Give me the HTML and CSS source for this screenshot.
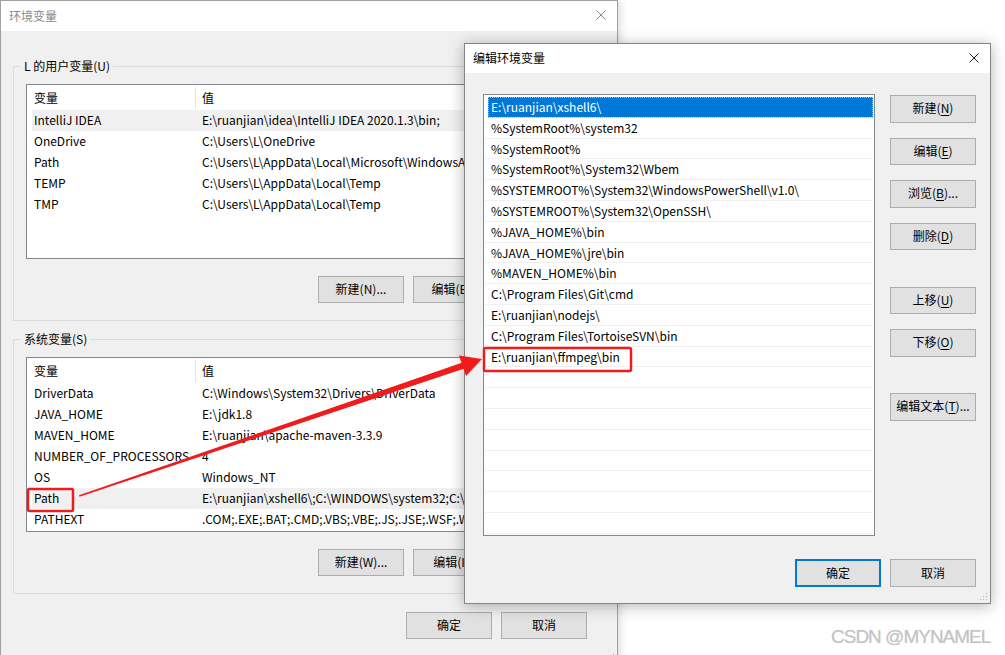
FILE: index.html
```html
<!DOCTYPE html>
<html lang="zh-CN">
<head>
    <meta charset="UTF-8">
    <title>环境变量</title>
    <link rel="stylesheet" href="styles.css">
</head>
<body>
    <div class="desk">

        <!-- 环境变量 (back window) -->
        <div class="win back">
            <div class="titlebar">
                <span class="title">环境变量</span>
                <svg class="close" width="10" height="10" viewBox="0 0 10 10"><path d="M0.5 0.5L9.5 9.5M9.5 0.5L0.5 9.5"/></svg>
            </div>
            <div class="win-body">
                <div class="group">
                    <div class="group-label">L 的用户变量(U)</div>
                    <div class="listview">
                        <div class="lv-head"><div class="c1">变量</div><div class="c2">值</div></div>
                        <div class="lv-row hot"><div class="c1">IntelliJ IDEA</div><div class="c2">E:\ruanjian\idea\IntelliJ IDEA 2020.1.3\bin;</div></div>
                        <div class="lv-row"><div class="c1">OneDrive</div><div class="c2">C:\Users\L\OneDrive</div></div>
                        <div class="lv-row"><div class="c1">Path</div><div class="c2">C:\Users\L\AppData\Local\Microsoft\WindowsApps;</div></div>
                        <div class="lv-row"><div class="c1">TEMP</div><div class="c2">C:\Users\L\AppData\Local\Temp</div></div>
                        <div class="lv-row"><div class="c1">TMP</div><div class="c2">C:\Users\L\AppData\Local\Temp</div></div>
                    </div>
                    <div class="btn-row">
                        <button>新建(N)...</button>
                        <button>编辑(E)...</button>
                        <button>删除(D)</button>
                    </div>
                </div>

                <div class="group sys">
                    <div class="group-label">系统变量(S)</div>
                    <div class="listview">
                        <div class="lv-head"><div class="c1">变量</div><div class="c2">值</div></div>
                        <div class="lv-row"><div class="c1">DriverData</div><div class="c2">C:\Windows\System32\Drivers\DriverData</div></div>
                        <div class="lv-row"><div class="c1">JAVA_HOME</div><div class="c2">E:\jdk1.8</div></div>
                        <div class="lv-row"><div class="c1">MAVEN_HOME</div><div class="c2">E:\ruanjian\apache-maven-3.3.9</div></div>
                        <div class="lv-row"><div class="c1">NUMBER_OF_PROCESSORS</div><div class="c2">4</div></div>
                        <div class="lv-row"><div class="c1">OS</div><div class="c2">Windows_NT</div></div>
                        <div class="lv-row hot"><div class="c1">Path</div><div class="c2">E:\ruanjian\xshell6\;C:\WINDOWS\system32;C:\WINDOWS</div></div>
                        <div class="lv-row"><div class="c1">PATHEXT</div><div class="c2">.COM;.EXE;.BAT;.CMD;.VBS;.VBE;.JS;.JSE;.WSF;.WSH;.MSC</div></div>
                    </div>
                    <div class="btn-row">
                        <button>新建(W)...</button>
                        <button>编辑(I)...</button>
                        <button>删除(L)</button>
                    </div>
                </div>

                <div class="dlg-buttons">
                    <button>确定</button>
                    <button>取消</button>
                </div>
            </div>
            <svg class="grip" width="10" height="10" viewBox="0 0 10 10"><path d="M8 2h1v1H8zM5 5h1v1H5zM8 5h1v1H8zM2 8h1v1H2zM5 8h1v1H5zM8 8h1v1H8z"/></svg>
        </div>

        <!-- 编辑环境变量 (front window) -->
        <div class="win front">
            <div class="titlebar">
                <span class="title">编辑环境变量</span>
                <svg class="close" width="10" height="10" viewBox="0 0 10 10"><path d="M0.5 0.5L9.5 9.5M9.5 0.5L0.5 9.5"/></svg>
            </div>
            <div class="win-body">
                <div class="edit-main">
                    <div class="pathlist">
                        <div class="p-row selected">E:\ruanjian\xshell6\</div>
                        <div class="p-row">%SystemRoot%\system32</div>
                        <div class="p-row">%SystemRoot%</div>
                        <div class="p-row">%SystemRoot%\System32\Wbem</div>
                        <div class="p-row">%SYSTEMROOT%\System32\WindowsPowerShell\v1.0\</div>
                        <div class="p-row">%SYSTEMROOT%\System32\OpenSSH\</div>
                        <div class="p-row">%JAVA_HOME%\bin</div>
                        <div class="p-row">%JAVA_HOME%\jre\bin</div>
                        <div class="p-row">%MAVEN_HOME%\bin</div>
                        <div class="p-row">C:\Program Files\Git\cmd</div>
                        <div class="p-row">E:\ruanjian\nodejs\</div>
                        <div class="p-row">C:\Program Files\TortoiseSVN\bin</div>
                        <div class="p-row">E:\ruanjian\ffmpeg\bin</div>
                        <div class="p-row"></div>
                        <div class="p-row"></div>
                        <div class="p-row"></div>
                        <div class="p-row"></div>
                        <div class="p-row"></div>
                        <div class="p-row"></div>
                        <div class="p-row"></div>
                        <div class="p-row"></div>
                    </div>
                    <div class="side-buttons">
                        <button>新建(<u>N</u>)</button>
                        <button class="gap-s">编辑(<u>E</u>)</button>
                        <button class="gap-s">浏览(<u>B</u>)...</button>
                        <button class="gap-s">删除(<u>D</u>)</button>
                        <button class="gap-l">上移(<u>U</u>)</button>
                        <button class="gap-s">下移(<u>O</u>)</button>
                        <button class="gap-l">编辑文本(<u>T</u>)...</button>
                    </div>
                </div>
                <div class="dlg-buttons">
                    <button class="default">确定</button>
                    <button>取消</button>
                </div>
            </div>
            <svg class="grip" width="10" height="10" viewBox="0 0 10 10"><path d="M8 2h1v1H8zM5 5h1v1H5zM8 5h1v1H8zM2 8h1v1H2zM5 8h1v1H5zM8 8h1v1H8z"/></svg>
        </div>

        <!-- 标注 -->
        <svg class="marks" width="1005" height="655" viewBox="0 0 1005 655">
            <rect x="28" y="489" width="45" height="22" rx="1.5"/>
            <rect x="484" y="348" width="147" height="23" rx="1.5"/>
            <polygon class="fill" points="79,495.3 79.5,496.8 464.5,368.5 462.5,362.5"/>
            <polygon class="fill" points="482,359 459,355.5 466,376"/>
        </svg>

        <div class="watermark">CSDN @MYNAMEL</div>
    </div>
</body>
</html>
```

FILE: styles.css
```css
body {
    margin: 0;
    padding: 0;
    background-color: white;
    font-family: "Noto Sans CJK SC", "Noto Sans", sans-serif;
    font-size: 12px;
    color: #000;
}
.desk {
    position: relative;
    width: 1005px;
    height: 655px;
    overflow: hidden;
}
.win {
    position: absolute;
    box-sizing: border-box;
    background-color: #f0f0f0;
    border: 1px solid #a0a0a0;
}
.back {
    left: 0;
    top: 0;
    width: 618px;
    height: 665px;
    box-shadow: 2px 0 8px rgba(0,0,0,0.15);
}
.front {
    left: 464px;
    top: 43px;
    width: 527px;
    height: 561px;
    border-color: #858585;
    box-shadow: 0 2px 14px rgba(0,0,0,0.3);
}
.titlebar {
    height: 30px;
    box-sizing: border-box;
    background-color: white;
    display: flex;
    align-items: center;
    justify-content: space-between;
    padding: 0 11px 2px 8px;
}
.front .titlebar {
    height: 29px;
}
.back .title {
    color: #8a8a8a;
}
.close {
    fill: none;
    stroke: #1a1a1a;
    stroke-width: 1;
}
.back .close {
    stroke: #8a8a8a;
}
.win-body {
    padding: 0 11px 0 12px;
}
button {
    font-family: inherit;
    font-size: 12px;
    color: #000;
    background: #e1e1e1;
    border: 1px solid #adadad;
    width: 86px;
    height: 28px;
    padding: 0 0 2px 0;
    margin: 0;
    box-sizing: border-box;
}
button u {
    text-decoration-thickness: 1px;
    text-underline-offset: 2px;
}
button.default {
    border: 2px solid #0078d7;
}

/* back window groups */
.group {
    border: 1px solid #dcdcdc;
    margin-top: 35px;
    padding: 0 11px 17px 12px;
}
.group.sys {
    margin-top: 18px;
}
.group-label {
    display: block;
    width: max-content;
    height: 16px;
    line-height: 16px;
    margin: -9px 0 0 -5px;
    padding: 0 3px;
    background-color: #f0f0f0;
}
.listview {
    margin-top: 10px;
    height: 175px;
    box-sizing: border-box;
    background: white;
    border: 1px solid #828790;
    overflow: hidden;
}
.lv-head {
    display: flex;
    height: 25px;
    align-items: center;
}
.lv-head .c1 {
    width: 161px;
    padding-left: 7px;
    border-right: 1px solid #e5e5e5;
    height: 22px;
    line-height: 22px;
}
.lv-head .c2 {
    padding-left: 6px;
}
.lv-row {
    display: flex;
    height: 21px;
    line-height: 20px;
    margin-left: 5px;
    white-space: nowrap;
}
.lv-row.hot {
    background-color: #f0f0f0;
}
.lv-row .c1 {
    width: 161px;
    padding-left: 2px;
    overflow: hidden;
    flex-shrink: 0;
}
.lv-row .c2 {
    padding-left: 7px;
}
.btn-row {
    display: flex;
    justify-content: flex-end;
    gap: 9px;
    margin-top: 17px;
}
.btn-row button {
    height: 27px;
}
.dlg-buttons {
    display: flex;
    justify-content: flex-end;
    gap: 9px;
    margin: 18px 19px 0 0;
}
.back .dlg-buttons button {
    height: 27px;
}

/* front window */
.front .win-body {
    padding: 21px 14px 0 18px;
}
.edit-main {
    display: flex;
    gap: 15px;
}
.pathlist {
    width: 392px;
    height: 442px;
    box-sizing: border-box;
    background: white;
    border: 1px solid #828790;
    padding: 2px 1px 0 1px;
    overflow: hidden;
}
.p-row {
    height: 20.8px;
    line-height: 20px;
    box-sizing: border-box;
    border-bottom: 1px solid #f0f0f0;
    padding-left: 6px;
    white-space: nowrap;
}
.p-row.selected {
    background-color: #0078d7;
    color: white;
    margin-left: 3px;
    padding-left: 3px;
    outline: 1px dotted #f0b050;
    outline-offset: -1px;
}
.side-buttons {
    display: flex;
    flex-direction: column;
    padding-top: 1px;
}
.side-buttons button {
    height: 27.5px;
}
.side-buttons .gap-s {
    margin-top: 15px;
}
.side-buttons .gap-l {
    margin-top: 36.5px;
}
.front .dlg-buttons {
    margin: 23px 0 0 0;
}
.grip {
    position: absolute;
    right: 2px;
    bottom: 2px;
    fill: #b5b5b5;
}

/* annotations */
.marks {
    position: absolute;
    left: 0;
    top: 0;
    pointer-events: none;
}
.marks rect {
    fill: none;
    stroke: #f01c1c;
    stroke-width: 2.5;
}
.marks .fill {
    fill: #f01c1c;
    stroke: none;
}
.watermark {
    position: absolute;
    left: 831px;
    top: 626px;
    font-family: "Liberation Sans", Arial, sans-serif;
    font-size: 19px;
    letter-spacing: -1px;
    color: #c4c4c4;
    text-shadow: 0 0 1px rgba(0,0,0,0.15);
    white-space: nowrap;
}
```
